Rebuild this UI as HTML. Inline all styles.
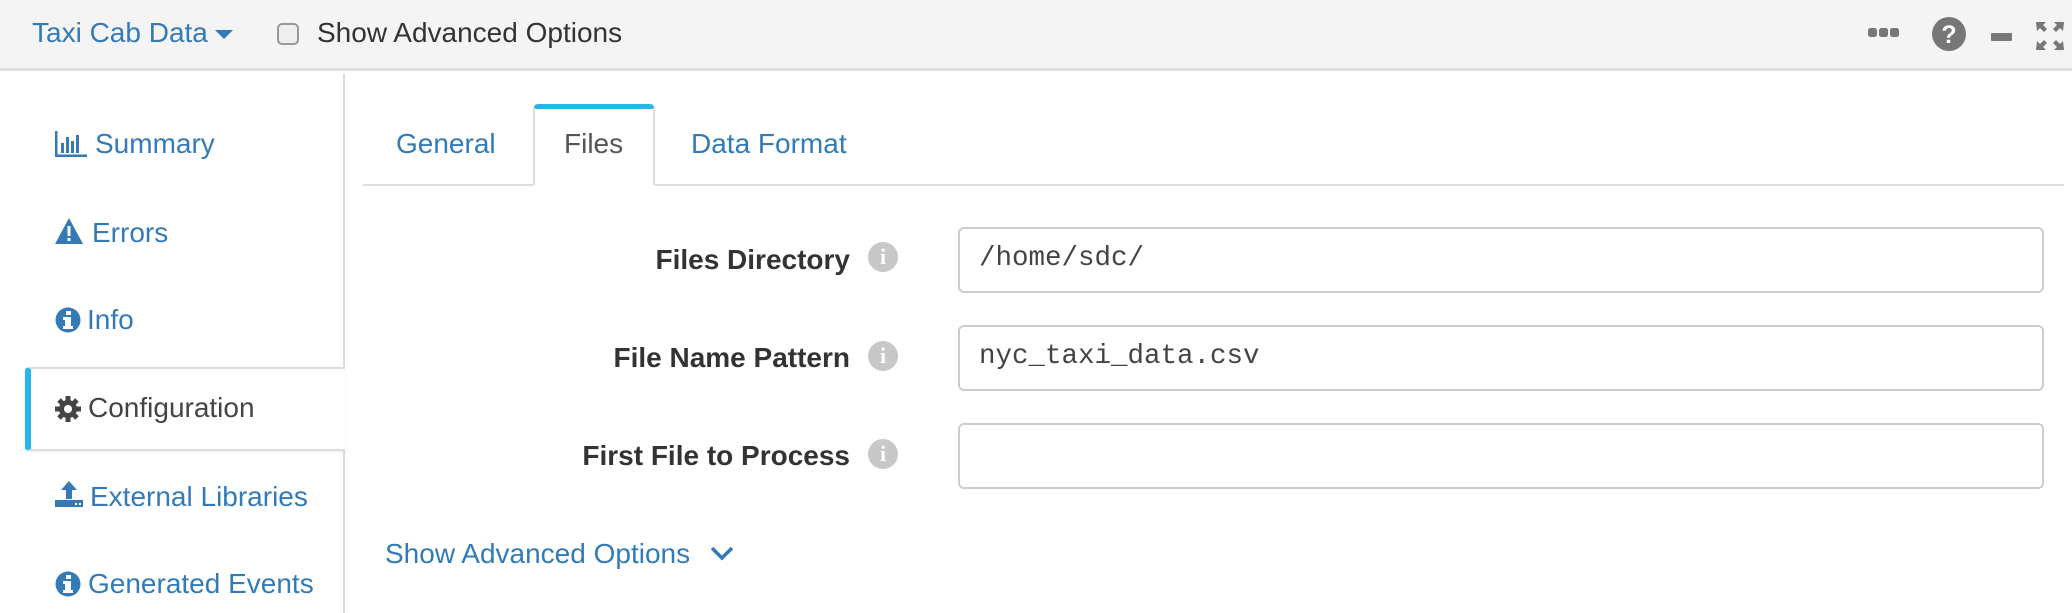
<!DOCTYPE html>
<html><head><style>
*{box-sizing:border-box;margin:0;padding:0}
body{width:2072px;height:613px;overflow:hidden;background:#fff;font-family:"Liberation Sans",Arial,sans-serif;color:#333;position:relative}
.a{position:absolute;white-space:nowrap}
.blue{color:#337ab7}
.hdr{left:0;top:0;width:2072px;height:71px;background:#f4f4f4;border-bottom:3px solid #ddd}
.side{font-size:28px;line-height:30px}
.lbl{font-weight:bold;font-size:28px;right:1222px;line-height:30px}
.inp{left:958px;width:1086px;height:66px;border:2px solid #ccc;border-radius:6px;font-family:"Liberation Mono",monospace;font-size:27.5px;padding-left:19px;line-height:60px;color:#444}
.ii{width:30px;height:30px;border-radius:50%;background:#c8c8c8;color:#fff;font-family:"Liberation Serif",serif;font-weight:bold;font-size:22px;text-align:center;line-height:30px}
</style></head><body>
<div class="a hdr"></div>
<div class="a blue" style="left:32px;top:17px;font-size:28px">Taxi Cab Data</div>
<svg class="a" style="left:215px;top:30px" width="18" height="10"><path d="M0 0H18L9 9Z" fill="#337ab7"/></svg>
<div class="a" style="left:277px;top:23px;width:22px;height:22px;border:2px solid #999;border-radius:5px;background:#eee"></div>
<div class="a" style="left:317px;top:17px;font-size:28px">Show Advanced Options</div>
<svg class="a" style="left:1868px;top:27px" width="34" height="12"><rect x="0" y="1" width="9" height="9" rx="2.5" fill="#777"/><rect x="11" y="1" width="9" height="9" rx="2.5" fill="#777"/><rect x="22" y="1" width="9" height="9" rx="2.5" fill="#777"/></svg>
<svg class="a" style="left:1931px;top:16px" width="36" height="36"><circle cx="18" cy="18" r="17" fill="#777"/><text x="18" y="27" text-anchor="middle" font-family="Liberation Sans" font-weight="bold" font-size="25" fill="#fff">?</text></svg>
<div class="a" style="left:1991px;top:33px;width:21px;height:8px;background:#777;border-radius:1px"></div>
<svg class="a" style="left:2035px;top:21px" width="30" height="30" fill="#777"><path d="M1 1h10l-3 3 4 4-3 3-4-4-3 3z M29 1h-10l3 3-4 4 3 3 4-4 3 3z M1 29h10l-3-3 4-4-3-3-4 4-3-3z M29 29h-10l3-3-4-4 3-3 4 4 3-3z"/></svg>

<div class="a" style="left:343px;top:74px;width:2px;height:294px;background:#ddd"></div>
<div class="a" style="left:343px;top:449px;width:2px;height:164px;background:#ddd"></div>
<div class="a" style="left:25px;top:367px;width:320px;height:84px;border:2px solid #ddd;border-right:none;border-left:6px solid #2bb5e6;border-radius:4px 0 0 4px;box-shadow:0 1px 3px rgba(0,0,0,.08);background:#fff"></div>

<svg class="a" style="left:55px;top:131px" width="32" height="26" fill="#337ab7"><rect x="0" y="0" width="2.5" height="26"/><rect x="0" y="23.5" width="32" height="2.5"/><rect x="6" y="12" width="3" height="10"/><rect x="11" y="6" width="3" height="16"/><rect x="16" y="10" width="3" height="12"/><rect x="21" y="4" width="3" height="18"/></svg>
<div class="a blue side" style="left:95px;top:129px">Summary</div>
<svg class="a" style="left:55px;top:218px" width="28" height="26"><path d="M14 0L28 26H0Z" fill="#337ab7"/><rect x="12.5" y="8" width="3" height="10" fill="#fff"/><rect x="12.5" y="20" width="3" height="3" fill="#fff"/></svg>
<div class="a blue side" style="left:92px;top:218px">Errors</div>
<svg class="a" style="left:55px;top:307px" width="26" height="26"><circle cx="13" cy="13" r="12.5" fill="#337ab7"/><rect x="11" y="4" width="5" height="4" fill="#fff"/><path d="M8 10h8v9h2v3H8v-3h2v-6H8z" fill="#fff"/></svg>
<div class="a blue side" style="left:87px;top:305px">Info</div>
<svg class="a" style="left:55px;top:396px" width="26" height="26" fill="#444"><circle cx="13" cy="13" r="9"/><g stroke="#444" stroke-width="5"><line x1="13" y1="0" x2="13" y2="26"/><line x1="0" y1="13" x2="26" y2="13"/><line x1="4" y1="4" x2="22" y2="22"/><line x1="22" y1="4" x2="4" y2="22"/></g><circle cx="13" cy="13" r="4" fill="#fff"/></svg>
<div class="a side" style="left:88px;top:393px;color:#444">Configuration</div>
<svg class="a" style="left:55px;top:481px" width="28" height="26" fill="#337ab7"><path d="M14 0L22 9H17V18H11V9H6Z"/><rect x="0" y="19" width="28" height="7"/><rect x="20" y="22" width="2" height="2" fill="#fff"/><rect x="24" y="22" width="2" height="2" fill="#fff"/></svg>
<div class="a blue side" style="left:90px;top:482px">External Libraries</div>
<svg class="a" style="left:55px;top:571px" width="26" height="26"><circle cx="13" cy="13" r="12.5" fill="#337ab7"/><rect x="11" y="4" width="5" height="4" fill="#fff"/><path d="M8 10h8v9h2v3H8v-3h2v-6H8z" fill="#fff"/></svg>
<div class="a blue side" style="left:88px;top:569px">Generated Events</div>

<div class="a" style="left:363px;top:184px;width:1701px;height:2px;background:#ddd"></div>
<div class="a" style="left:533px;top:104px;width:122px;height:82px;border:2px solid #ddd;border-top:5px solid #2bb5e6;border-bottom:2px solid #fff;border-radius:5px 5px 0 0;background:#fff"></div>
<div class="a blue" style="left:396px;top:128px;font-size:28px">General</div>
<div class="a" style="left:564px;top:128px;font-size:28px;color:#555">Files</div>
<div class="a blue" style="left:691px;top:128px;font-size:28px">Data Format</div>

<div class="a lbl" style="top:245px">Files Directory</div>
<div class="a ii" style="left:868px;top:242px">i</div>
<div class="a inp" style="top:227px">/home/sdc/</div>
<div class="a lbl" style="top:343px">File Name Pattern</div>
<div class="a ii" style="left:868px;top:341px">i</div>
<div class="a inp" style="top:325px">nyc_taxi_data.csv</div>
<div class="a lbl" style="top:441px">First File to Process</div>
<div class="a ii" style="left:868px;top:439px">i</div>
<div class="a inp" style="top:423px"></div>

<div class="a blue" style="left:385px;top:538px;font-size:28px">Show Advanced Options</div>
<svg class="a" style="left:710px;top:545px" width="24" height="16"><path d="M2 3L12 13L22 3" stroke="#337ab7" stroke-width="3.5" fill="none"/></svg>
</body></html>
